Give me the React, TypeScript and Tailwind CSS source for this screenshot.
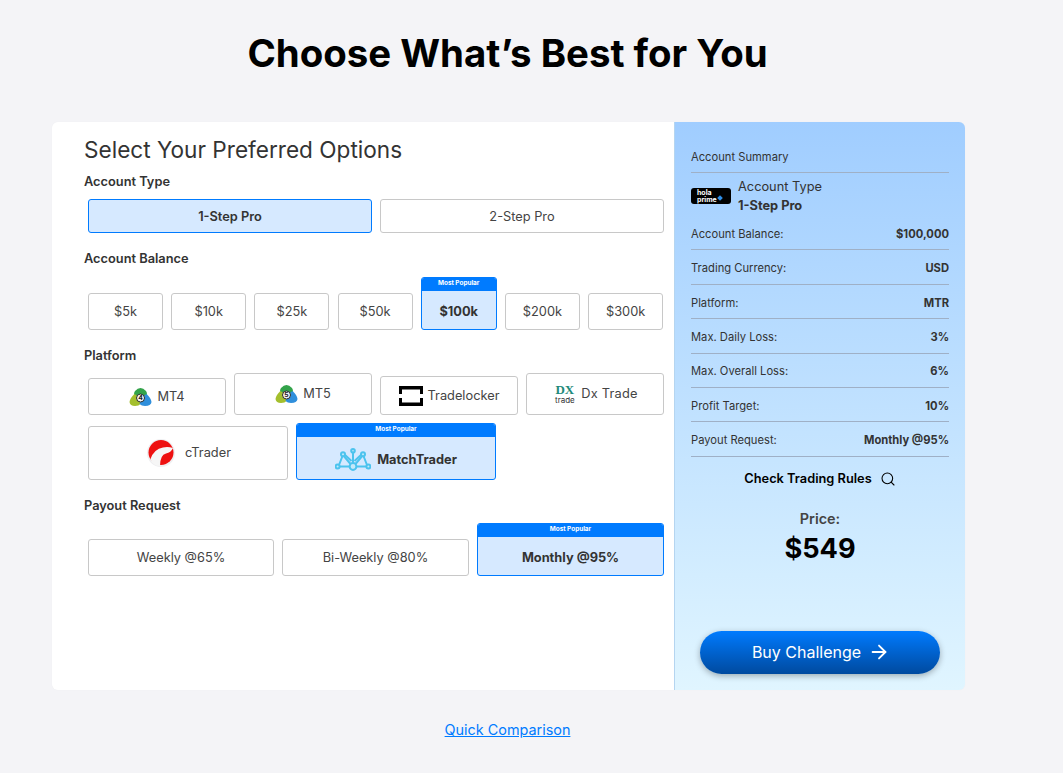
import { Search, ArrowRight } from 'lucide-react';

const balances = ['$5k', '$10k', '$25k', '$50k', '$100k', '$200k', '$300k'];

const summaryRows = [
  { label: 'Account Balance:', value: '$100,000' },
  { label: 'Trading Currency:', value: 'USD' },
  { label: 'Platform:', value: 'MTR' },
  { label: 'Max. Daily Loss:', value: '3%' },
  { label: 'Max. Overall Loss:', value: '6%' },
  { label: 'Profit Target:', value: '10%' },
  { label: 'Payout Request:', value: 'Monthly @95%' },
];

function MetaLogo({ n }: { n: string }) {
  return (
    <svg width="23" height="20" viewBox="0 0 23 20">
      <path d="M6 4 Q11.5 -2 17 4 Q19 7 17 11 L6 11 Q4 7 6 4Z" fill="#33a34a" />
      <path d="M5.5 7 Q1 11 0.5 15 Q1 19 6 19 Q10 19 11.5 17 L10 10Z" fill="#a4bf2d" />
      <path d="M17.5 7 Q22 11 22.5 15 Q22 19 16 19 Q12.5 19 10.5 17 L13 10Z" fill="#2f8fdc" />
      <circle cx="11.5" cy="11" r="4" fill="#f4f4f4" stroke="#2b2b2b" strokeWidth="1" />
      <text x="11.5" y="13.4" textAnchor="middle" fontSize="6.8" fontWeight="700" fill="#1a1a1a" fontFamily="Inter">{n}</text>
    </svg>
  );
}

function MatchLogo() {
  return (
    <svg width="36" height="23" viewBox="0 0 36 23" fill="none" stroke="#4cc3ee" strokeWidth="2">
      <circle cx="18" cy="18.5" r="3.4" fill="#c5e9f9" />
      <path d="M18 15V4M15.5 16L8 7M20.5 16L28 7M14.6 18.5H4M21.4 18.5H32" />
      <path d="M4 17L7.5 8M32 17L28.5 8M9.5 6.5L16.5 13M26.5 6.5L19.5 13" />
      <circle cx="18" cy="2.8" r="1.8" fill="#c5e9f9" />
      <circle cx="8" cy="6.2" r="2" fill="#c5e9f9" />
      <circle cx="28" cy="6.2" r="2" fill="#c5e9f9" />
      <circle cx="2.6" cy="18.5" r="2" fill="#c5e9f9" />
      <circle cx="33.4" cy="18.5" r="2" fill="#c5e9f9" />
    </svg>
  );
}

function Popular() {
  return (
    <div className="bg-[#007bff] text-white font-bold text-center text-[6.4px] h-[13px] leading-[11px]">
      Most Popular
    </div>
  );
}

export default function App() {
  return (
    <div className="min-h-[773px] bg-[#f4f4f7] font-['Inter',sans-serif] text-[#333]">
      <h1 className="w-[1015px] pt-[27px] text-center text-[38.4px] leading-[52px] font-bold text-black">
        Choose What’s Best for You
      </h1>

      <div className="mx-[52px] mt-[43px] flex w-[913px] h-[568px] rounded-md shadow-[0_0_1px_rgba(0,0,0,0.06)]">
        {/* Options */}
        <div className="w-[622px] bg-white rounded-l-md pl-[32px] pr-[10px] pt-[13px]">
          <h2 className="text-[22.6px] leading-[29px] font-normal text-[#333]">Select Your Preferred Options</h2>

          <p className="mt-[10px] text-[12.8px] leading-[16px] font-semibold">Account Type</p>
          <div className="mt-[9px] ml-[4px] flex gap-2">
            <button className="w-[284px] h-[34px] pt-[1px] rounded-[3px] border border-[#007bff] bg-[#d6e9ff] text-[12.8px] font-semibold">1-Step Pro</button>
            <button className="w-[284px] h-[34px] pt-[1px] rounded-[3px] border border-[#c8c8c8] text-[12.8px] text-[#444]">2-Step Pro</button>
          </div>

          <p className="mt-[18px] text-[12.8px] leading-[16px] font-semibold">Account Balance</p>
          <div className="mt-[10px] ml-[4px] flex items-end gap-[8.2px]">
            {balances.map((b) =>
              b === '$100k' ? (
                <div key={b} className="w-[76px] h-[53px] rounded-[3px] border border-[#007bff] bg-[#d6e9ff] overflow-hidden text-center">
                  <Popular />
                  <div className="pt-[2px] text-[12.8px] leading-[38px] font-bold">{b}</div>
                </div>
              ) : (
                <button key={b} className="w-[75px] h-[37px] rounded-[3px] border border-[#c8c8c8] text-[12.8px] text-[#444]">{b}</button>
              ),
            )}
          </div>

          <p className="mt-[18px] text-[12.8px] leading-[16px] font-semibold">Platform</p>
          <div className="mt-[9px] ml-[4px] flex items-end gap-2 text-[#444]">
            <button className="w-[138px] h-[37px] rounded-[3px] border border-[#c8c8c8] flex items-center justify-center gap-[5px] text-[12.8px]">
              <MetaLogo n="4" />
              <span>MT4</span>
            </button>
            <button className="w-[138px] h-[42px] rounded-[3px] border border-[#c8c8c8] flex items-center justify-center gap-[5px] text-[12.8px]">
              <MetaLogo n="5" />
              <span>MT5</span>
            </button>
            <button className="w-[138px] h-[39px] rounded-[3px] border border-[#c8c8c8] flex items-center justify-center gap-[5px] text-[12.8px]">
              <svg width="24" height="20" viewBox="0 0 24 20" fill="#000">
                <path d="M0 0H24V8H21V3.5H3V8H0ZM0 12H3V16.5H21V12H24V20H0Z" />
              </svg>
              <span>Tradelocker</span>
            </button>
            <button className="w-[138px] h-[42px] rounded-[3px] border border-[#c8c8c8] flex items-center justify-center gap-[7px] pl-[3px] text-[12.8px]">
              <span className="flex flex-col items-center w-[19px] leading-none">
                <span className="font-['Liberation_Serif',serif] text-[13px] leading-[12px] font-bold text-[#1f8a7a]">DX</span>
                <span className="text-[8px] leading-[9px] text-[#333]">trade</span>
              </span>
              <span className="tracking-[0.2px]">Dx Trade</span>
            </button>
          </div>

          <div className="mt-[8px] ml-[4px] flex items-end gap-2">
            <button className="w-[200px] h-[54px] pl-[2px] rounded-[3px] border border-[#c8c8c8] flex items-center justify-center gap-[10px] text-[12.8px] text-[#444]">
              <svg width="28" height="28" viewBox="0 0 28 28">
                <circle cx="14" cy="14" r="14" fill="#efeff1" />
                <circle cx="14" cy="13.5" r="12.5" fill="#ee1111" />
                <path d="M3.5 20 Q5 26 12 27 L13 27 Q13 16 19 14.5 Q24 13.5 26 9 Q21 7.5 16 8.5 Q7 10 3.5 20Z" fill="#f6f6f6" />
              </svg>
              <span>cTrader</span>
            </button>
            <div className="w-[200px] h-[57px] rounded-[3px] border border-[#007bff] bg-[#d6e9ff] overflow-hidden">
              <Popular />
              <div className="flex items-center justify-center gap-[6px] h-[42px] pt-[3px] text-[12.8px] font-bold">
                <MatchLogo />
                <span>MatchTrader</span>
              </div>
            </div>
          </div>

          <p className="mt-[18px] text-[12.8px] leading-[16px] font-semibold">Payout Request</p>
          <div className="mt-[9px] ml-[4px] flex items-end gap-2">
            <button className="w-[186px] h-[37px] rounded-[3px] border border-[#c8c8c8] text-[12.8px] text-[#444]">Weekly @65%</button>
            <button className="w-[187px] h-[37px] rounded-[3px] border border-[#c8c8c8] text-[12.8px] text-[#444]">Bi-Weekly @80%</button>
            <div className="w-[187px] h-[53px] rounded-[3px] border border-[#007bff] bg-[#d6e9ff] overflow-hidden text-center">
              <Popular />
              <div className="pt-[2px] text-[12.8px] leading-[38px] font-bold">Monthly @95%</div>
            </div>
          </div>
        </div>

        {/* Summary */}
        <div className="w-[291px] rounded-r-md border-l border-[#b5d5f0] bg-gradient-to-b from-[#a0cdff] to-[#e0f5ff] px-[16px] flex flex-col">
          <p className="mt-[28px] text-[11.2px] leading-[14px]">Account Summary</p>
          <div className="mt-[8px] h-px bg-[#9fb0c6]" />
          <div className="mt-[4px] flex items-center gap-[7px]">
            <div className="w-[40px] h-[16px] rounded-[3px] bg-black text-white flex items-center pl-[6px] gap-px">
              <span className="text-[7px] leading-[7px] font-bold">
                hola
                <br />
                prime
              </span>
              <span className="mt-[4px] w-[4px] h-[4px] rotate-45 bg-[#2f8fe8]" />
            </div>
            <div>
              <p className="text-[12.8px] leading-[19px]">Account Type</p>
              <p className="text-[12.8px] leading-[19px] font-bold">1-Step Pro</p>
            </div>
          </div>
          <div className="mt-[1px]">
            {summaryRows.map((r) => (
              <div
                key={r.label}
                className="h-[34.4px] pt-[3px] flex items-center justify-between text-[11.2px] border-b border-[#9fb0c6]"
              >
                <span>{r.label}</span>
                <span className="font-bold">{r.value}</span>
              </div>
            ))}
          </div>
          <div className="mt-[14px] flex items-center justify-center gap-[8px] text-[12.8px] leading-[16px] font-semibold text-black">
            Check Trading Rules
            <Search size={16} strokeWidth={1.6} />
          </div>
          <p className="mt-[23px] text-center text-[14.4px] leading-[18px] font-semibold text-[#444]">Price:</p>
          <p className="mt-[4px] text-center text-[27.2px] leading-[34px] font-bold text-black">$549</p>
          <button className="mt-[65px] mx-auto w-[240px] h-[43px] pl-[2px] rounded-full bg-gradient-to-b from-[#007bff] to-[#004a9f] text-white text-[16px] font-normal flex items-center justify-center gap-[7px] shadow-[0_2px_6px_rgba(0,0,0,0.3)]">
            Buy Challenge
            <ArrowRight size={22} strokeWidth={2} />
          </button>
        </div>
      </div>

      <div className="w-[1015px] mt-[27px] text-center">
        <a className="text-[14.4px] leading-[20px] text-[#007bff] underline">Quick Comparison</a>
      </div>
    </div>
  );
}
